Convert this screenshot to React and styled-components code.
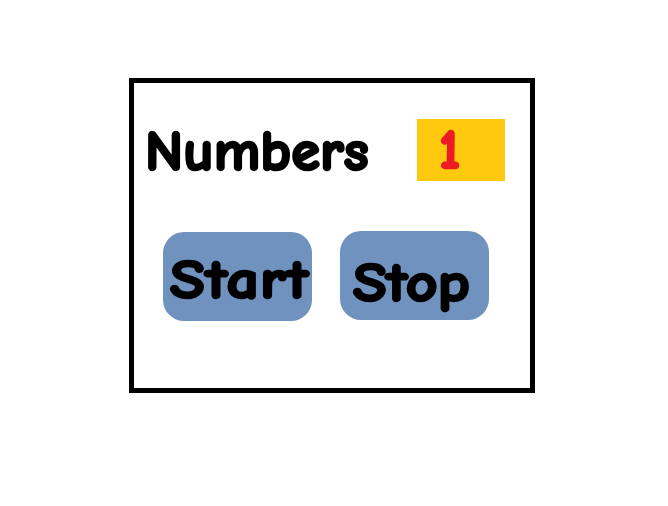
import React from "react";
import styled, { createGlobalStyle } from "styled-components";

const Global = createGlobalStyle`
  body { margin: 0; background: #fff; }
  * { box-sizing: border-box; }
`;

const Page = styled.main`
  width: 668px;
  height: 506px;
  padding: 78px 0 0 129px;
  overflow: hidden;
  font-family: "Comic Sans MS", "Comic Neue", Lato, sans-serif;
  font-weight: 700;
  color: #000;
`;

const Panel = styled.section`
  width: 406px;
  height: 315px;
  border: 5px solid #000;
`;

const Header = styled.header`
  display: flex;
  justify-content: space-between;
  height: 148px;
  padding: 36px 25px 0 11px;
`;

const Label = styled.span`
  display: block;
  height: 62px;
  margin-top: ${(p) => p.$top || 0}px;
  margin-left: ${(p) => p.$indent || 0}px;
  font-size: ${(p) => p.$size || 54}px;
  line-height: 62px;
  letter-spacing: ${(p) => p.$spacing || 0}px;
  white-space: nowrap;
  text-align: left;
  color: ${(p) => p.$color || "#000"};
  -webkit-text-stroke: ${(p) => p.$stroke ?? 2.5}px currentColor;
  stroke-linejoin: round;
  transform: scaleX(${(p) => p.$stretch || 1});
  transform-origin: left center;
`;

const Counter = styled.output`
  display: flex;
  width: 88px;
  height: 62px;
  background: #ffc90e;
`;

const Controls = styled.div`
  display: flex;
  gap: 28px;
  padding-left: 29px;
`;

const ControlButton = styled.button`
  display: flex;
  align-items: flex-start;
  width: 149px;
  height: 89px;
  margin-top: ${(p) => p.$drop || 0}px;
  padding: 0;
  border: 0;
  border-radius: 21px;
  background: #7092be;
  font: inherit;
  color: inherit;
`;

export default function App() {
  return (
    <Page>
      <Global />
      <Panel>
        <Header>
          <Label $size={56} $top={2} $stretch={1.045} $spacing={0.1}>Numbers</Label>
          <Counter><Label $top={1} $indent={22} $color="#ed1c24">1</Label></Counter>
        </Header>
        <Controls>
          <ControlButton $drop={1}><Label $top={18} $indent={7} $stretch={1.18} $spacing={1}>Start</Label></ControlButton>
          <ControlButton><Label $top={22} $indent={13} $stretch={1.14} $spacing={0.2}>Stop</Label></ControlButton>
        </Controls>
      </Panel>
    </Page>
  );
}
